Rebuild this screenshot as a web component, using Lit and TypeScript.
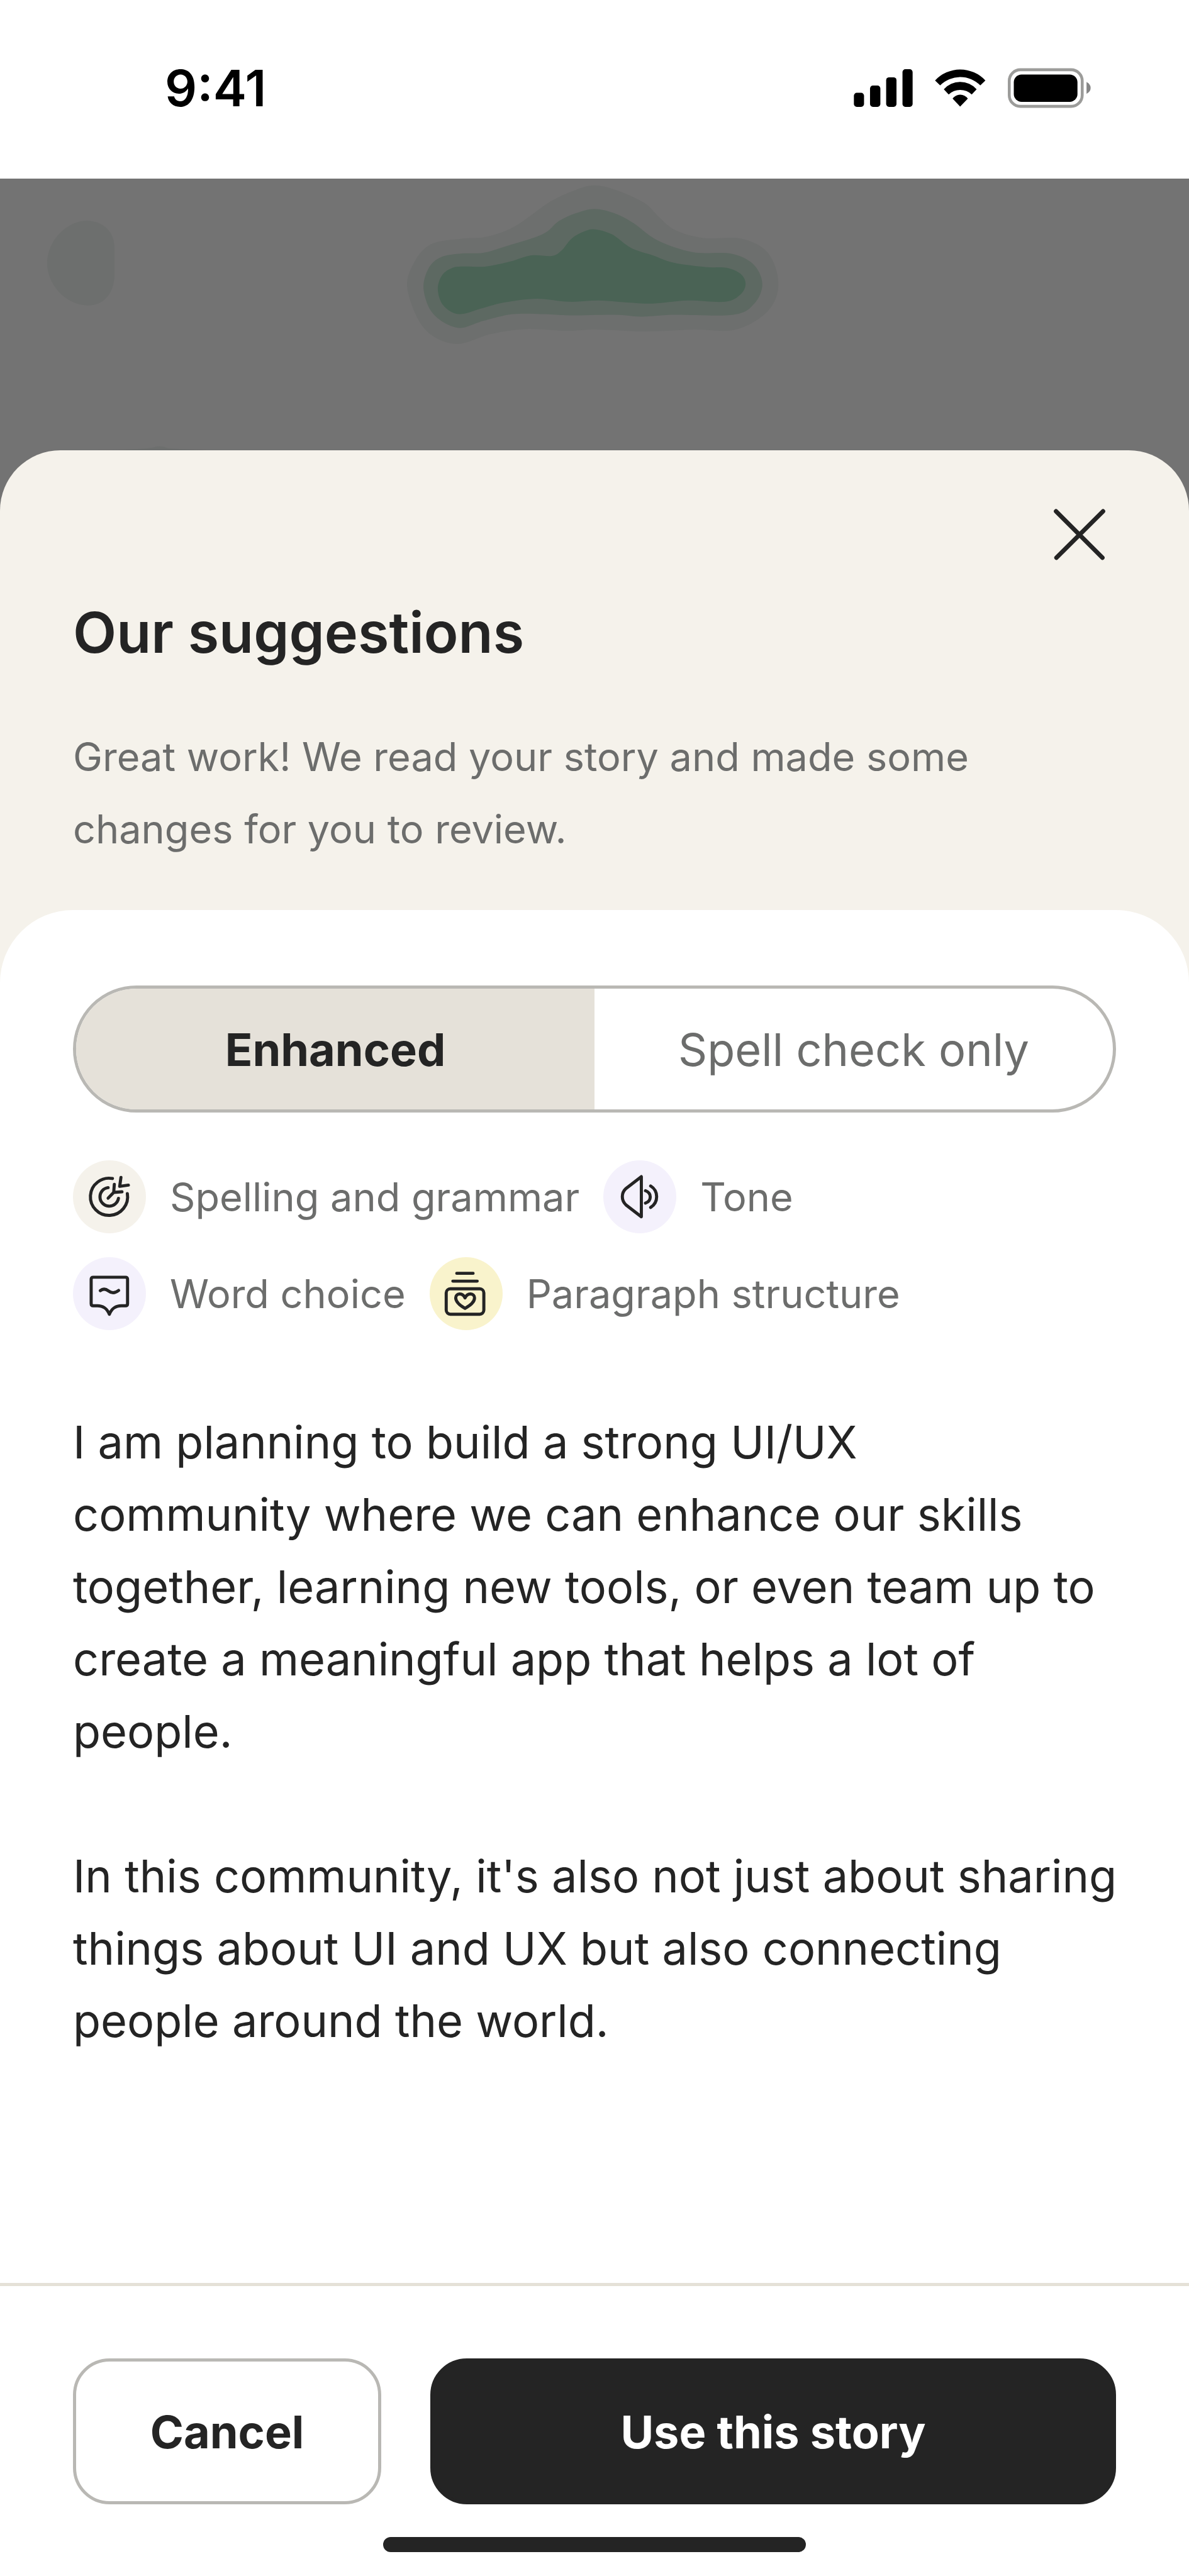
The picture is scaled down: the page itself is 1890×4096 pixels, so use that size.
import { LitElement, html, svg, css } from "lit";
import { customElement, property, state } from "lit/decorators.js";
import { classMap } from "lit/directives/class-map.js";

type Point = [number, number];

/** Smooth closed outline through the given points (Catmull-Rom as Béziers). */
function smooth(points: Point[]): string {
  const n = points.length;
  let d = `M${points[0][0]} ${points[0][1]}`;
  for (let i = 0; i < n; i++) {
    const a = points[(i - 1 + n) % n];
    const b = points[i];
    const c = points[(i + 1) % n];
    const e = points[(i + 2) % n];
    const x1 = b[0] + (c[0] - a[0]) / 6;
    const y1 = b[1] + (c[1] - a[1]) / 6;
    const x2 = c[0] - (e[0] - b[0]) / 6;
    const y2 = c[1] - (e[1] - b[1]) / 6;
    d += `C${x1} ${y1} ${x2} ${y2} ${c[0]} ${c[1]}`;
  }
  return d + "Z";
}

const OUTER: Point[] = [
  [658, 467], [668, 425], [696, 394], [746, 385], [780, 383], [810, 375], [840, 360], [889, 325],
  [928, 307], [960, 299], [996, 307], [1040, 327], [1064, 350], [1090, 371], [1136, 384],
  [1197, 385], [1240, 408], [1257, 458], [1240, 502], [1188, 532], [1120, 532], [1041, 535],
  [963, 532], [915, 534], [850, 531], [793, 539], [735, 555], [685, 530],
];
const MIDDLE: Point[] = [
  [684, 467], [692, 433], [712, 415], [746, 409], [780, 408], [815, 398], [876, 378], [902, 357],
  [930, 344], [960, 337], [992, 344], [1023, 360], [1062, 388], [1119, 407], [1179, 409],
  [1216, 426], [1231, 458], [1218, 490], [1184, 508], [1088, 508], [1036, 511], [993, 508],
  [919, 509], [880, 507], [828, 507], [780, 518], [739, 529], [700, 507],
];
const CORE: Point[] = [
  [707, 467], [714, 444], [731, 432], [750, 430], [785, 430], [824, 422], [858, 412], [891, 413],
  [906, 405], [923, 385], [942, 374], [960, 370], [988, 378], [1019, 400], [1054, 412],
  [1088, 424], [1140, 431], [1173, 432], [1196, 442], [1204, 458], [1196, 475], [1171, 487],
  [1110, 485], [1054, 490], [1010, 488], [967, 485], [919, 487], [867, 482], [815, 488],
  [780, 497], [741, 507], [716, 493],
];

const icons = {
  target: svg`<g transform="translate(-52 -77)">
    <path d="M243 165A90 90 0 1 0 315 238"/>
    <path d="M222 209A45 45 0 1 0 272 261"/>
    <path d="M222 260L249 232M252 193L249 232L289 229"/>
    <path d="M284 160L278 203L320 197"/></g>`,
  tone: svg`<g transform="translate(-916 -47)">
    <path d="M1100 126V320L1026 263C1002 241 1002 205 1026 183Z"/>
    <path d="M1120 194Q1143 203 1143 224T1120 254"/>
    <path d="M1145 171Q1174 189 1174 223T1145 275"/></g>`,
  word: svg`<g transform="translate(-52 -546)">
    <path d="M150 643H306Q316 643 316 653V771Q316 781 306 781H286C256 781 240 795 228 822C216 795 200 781 170 781H150Q140 781 140 771V653Q140 643 150 643Z"/>
    <path d="M184 708C198 697 210 699 223 709S254 722 273 707"/></g>`,
  paragraph: svg`<g transform="translate(-91 -516)">
    <path d="M222 594H301M203 632H321"/>
    <rect x="171" y="669" width="182" height="123" rx="20"/>
    <path d="M262 764C240 751 217 735 217 713C217 690 250 686 262 713C274 686 308 690 308 713C308 735 284 751 262 764Z"/></g>`,
};

@customElement("status-bar")
class StatusBar extends LitElement {
  static styles = css`
    :host {
      display: flex;
      align-items: center;
      justify-content: space-between;
      box-sizing: border-box;
      height: 284px;
      padding: 0 156px 4px 262px;
      background: #fff;
      color: #000;
    }
    .time { font-size: 80px; line-height: 96px; font-weight: 600; }
    .signals { display: flex; align-items: center; gap: 35px; }
    .cell { width: 94px; height: 60px; }
    .wifi { width: 81px; height: 60px; }
    .battery { width: 132px; height: 64px; }
  `;
  render() {
    return html`
      <time class="time">9:41</time>
      <div class="signals">
        <svg class="cell" viewBox="52 66 286 182" aria-hidden="true">
          <rect x="53" y="180" width="49" height="68" rx="14" />
          <rect x="131" y="145" width="50" height="103" rx="14" />
          <rect x="209" y="105" width="50" height="143" rx="14" />
          <rect x="288" y="66" width="49" height="182" rx="14" />
        </svg>
        <svg class="wifi" viewBox="444 65 250 184" aria-hidden="true">
          <path d="M445 120A168 168 0 0 1 692 120L667 144A139 139 0 0 0 470 144Z" />
          <path d="M488 163A108 108 0 0 1 649 163L625 189A81 81 0 0 0 512 189Z" />
          <path d="M531 209A46 46 0 0 1 606 209L568 248Z" />
        </svg>
        <svg class="battery" viewBox="800 60 403 194" aria-hidden="true">
          <rect x="807" y="68" width="354" height="178" rx="54" fill="none" stroke="#9c9c9a" stroke-width="14" />
          <rect x="829" y="91" width="309" height="133" rx="38" />
          <path d="M1182 127Q1202 138 1202 156T1182 185Z" fill="#858585" />
        </svg>
      </div>
    `;
  }
}

@customElement("change-tag")
class ChangeTag extends LitElement {
  @property() icon: keyof typeof icons = "target";
  @property() tint = "sand";
  @property() label = "";
  static styles = css`
    :host { display: flex; align-items: center; gap: 38px; }
    .disc { display: flex; width: 116px; height: 116px; border-radius: 50%; }
    .sand { background: #f5f2eb; }
    .lilac { background: #f4f1fc; }
    .lemon { background: #f9f3cc; }
    .glyph {
      width: 100%;
      height: 100%;
      fill: none;
      stroke: #242424;
      stroke-width: 15;
      stroke-linecap: round;
      stroke-linejoin: round;
    }
    .label { font-size: 63px; line-height: 116px; color: #6c6d6c; white-space: nowrap; }
  `;
  render() {
    return html`
      <span class=${classMap({ disc: true, [this.tint]: true })}>
        <svg class="glyph" viewBox="0 0 353 353" aria-hidden="true">${icons[this.icon]}</svg>
      </span>
      <span class="label">${this.label}</span>
    `;
  }
}

@customElement("app-root")
class AppRoot extends LitElement {
  @state() private mode = "Enhanced";

  static styles = css`
    :host {
      display: flex;
      flex-direction: column;
      min-height: 100vh;
      background: #fff;
      color: #242424;
      font-family: Inter, "Liberation Sans", sans-serif;
    }
    h1, p { margin: 0; }
    button { font: inherit; color: inherit; cursor: pointer; }
    .stage { display: flex; flex-direction: column; flex: 1; background: #737373; }
    .scene { display: block; width: 100%; height: 432px; }
    .sheet {
      display: flex;
      flex-direction: column;
      flex: 1;
      border-radius: 96px 96px 0 0;
      background: #f5f2eb;
    }
    .intro { display: flex; flex-direction: column; padding: 76px 116px 71px; }
    .close {
      display: flex;
      align-items: center;
      justify-content: center;
      align-self: flex-end;
      width: 116px;
      height: 116px;
      padding: 0;
      border: 0;
      background: none;
    }
    .cross { width: 84px; height: 84px; stroke: #242424; stroke-width: 21; stroke-linecap: round; }
    .title { margin-top: 40px; font-size: 90px; line-height: 116px; font-weight: 600; }
    .lead { margin-top: 82px; font-size: 63px; line-height: 115px; color: #6c6d6c; }
    .panel {
      flex: 1;
      padding: 120px 116px 0;
      border-radius: 116px 116px 0 0;
      background: #fff;
    }
    .switch {
      display: grid;
      grid-template-columns: 1fr 1fr;
      box-sizing: border-box;
      height: 202px;
      overflow: hidden;
      border: 5px solid #b9b8b4;
      border-radius: 101px;
    }
    .option { padding: 0; border: 0; background: none; font-size: 72px; color: #6c6d6c; }
    .option.chosen { background: #e5e1d9; font-weight: 700; color: #242424; }
    .tags { display: flex; flex-wrap: wrap; gap: 38px; margin-top: 76px; }
    .story {
      display: grid;
      gap: 115px;
      margin: 120px -16px 0 0;
      font-size: 72px;
      line-height: 115px;
    }
    .footer {
      display: flex;
      flex-direction: column;
      align-items: center;
      gap: 52px;
      padding: 115px 116px 38px;
      border-top: 5px solid #e5e1d7;
      background: #fff;
    }
    .actions { display: grid; grid-template-columns: 490fr 1090fr; gap: 78px; width: 100%; }
    .action {
      height: 232px;
      padding: 0;
      border: 5px solid #b9b8b4;
      border-radius: 58px;
      background: #fff;
      font-size: 72px;
      font-weight: 700;
    }
    .action.primary { border-color: #242424; background: #242424; color: #fff; }
    .home { width: 672px; height: 24px; border-radius: 12px; background: #242424; }
  `;

  private option(name: string) {
    const chosen = this.mode === name;
    return html`<button
      type="button"
      class=${classMap({ option: true, chosen })}
      aria-pressed=${chosen ? "true" : "false"}
      @click=${() => (this.mode = name)}
    >${name}</button>`;
  }

  render() {
    return html`
      <status-bar></status-bar>
      <div class="stage">
        <svg class="scene" viewBox="0 288 1920 439" preserveAspectRatio="xMidYMid slice" aria-hidden="true">
          <path fill="#6d6f6e" d="M76 423C78 386 108 357 141 356C168 358 185 374 185 402V446C183 474 168 493 141 493C106 492 76 460 76 423Z" />
          <path fill="#6d6f6e" d="M150 727Q230 726 248 722Q260 718 272 724Q310 726 336 727Z" />
          <path fill="#6d6f6e" d=${smooth(OUTER)} />
          <path fill="#5d6962" d=${smooth(MIDDLE)} />
          <path fill="#4a6355" d=${smooth(CORE)} />
        </svg>
        <main class="sheet">
          <header class="intro">
            <button type="button" class="close" aria-label="Close">
              <svg class="cross" viewBox="305 305 255 255" aria-hidden="true">
                <path d="M319 320L543 544M546 320L321 544" />
              </svg>
            </button>
            <h1 class="title">Our suggestions</h1>
            <p class="lead">Great work! We read your story and made some changes for you to review.</p>
          </header>
          <section class="panel">
            <div class="switch" role="group" aria-label="Suggestion type">
              ${this.option("Enhanced")}${this.option("Spell check only")}
            </div>
            <div class="tags">
              <change-tag icon="target" tint="sand" label="Spelling and grammar"></change-tag>
              <change-tag icon="tone" tint="lilac" label="Tone"></change-tag>
              <change-tag icon="word" tint="lilac" label="Word choice"></change-tag>
              <change-tag icon="paragraph" tint="lemon" label="Paragraph structure"></change-tag>
            </div>
            <article class="story">
              <p>I am planning to build a strong UI/UX<br />community where we can enhance our skills together, learning new tools, or even team up to create a meaningful app that helps a lot of<br />people.</p>
              <p>In this community, it's also not just about sharing things about UI and UX but also connecting people around the world.</p>
            </article>
          </section>
        </main>
      </div>
      <footer class="footer">
        <div class="actions">
          <button type="button" class="action">Cancel</button>
          <button type="button" class="action primary">Use this story</button>
        </div>
        <div class="home"></div>
      </footer>
    `;
  }
}
